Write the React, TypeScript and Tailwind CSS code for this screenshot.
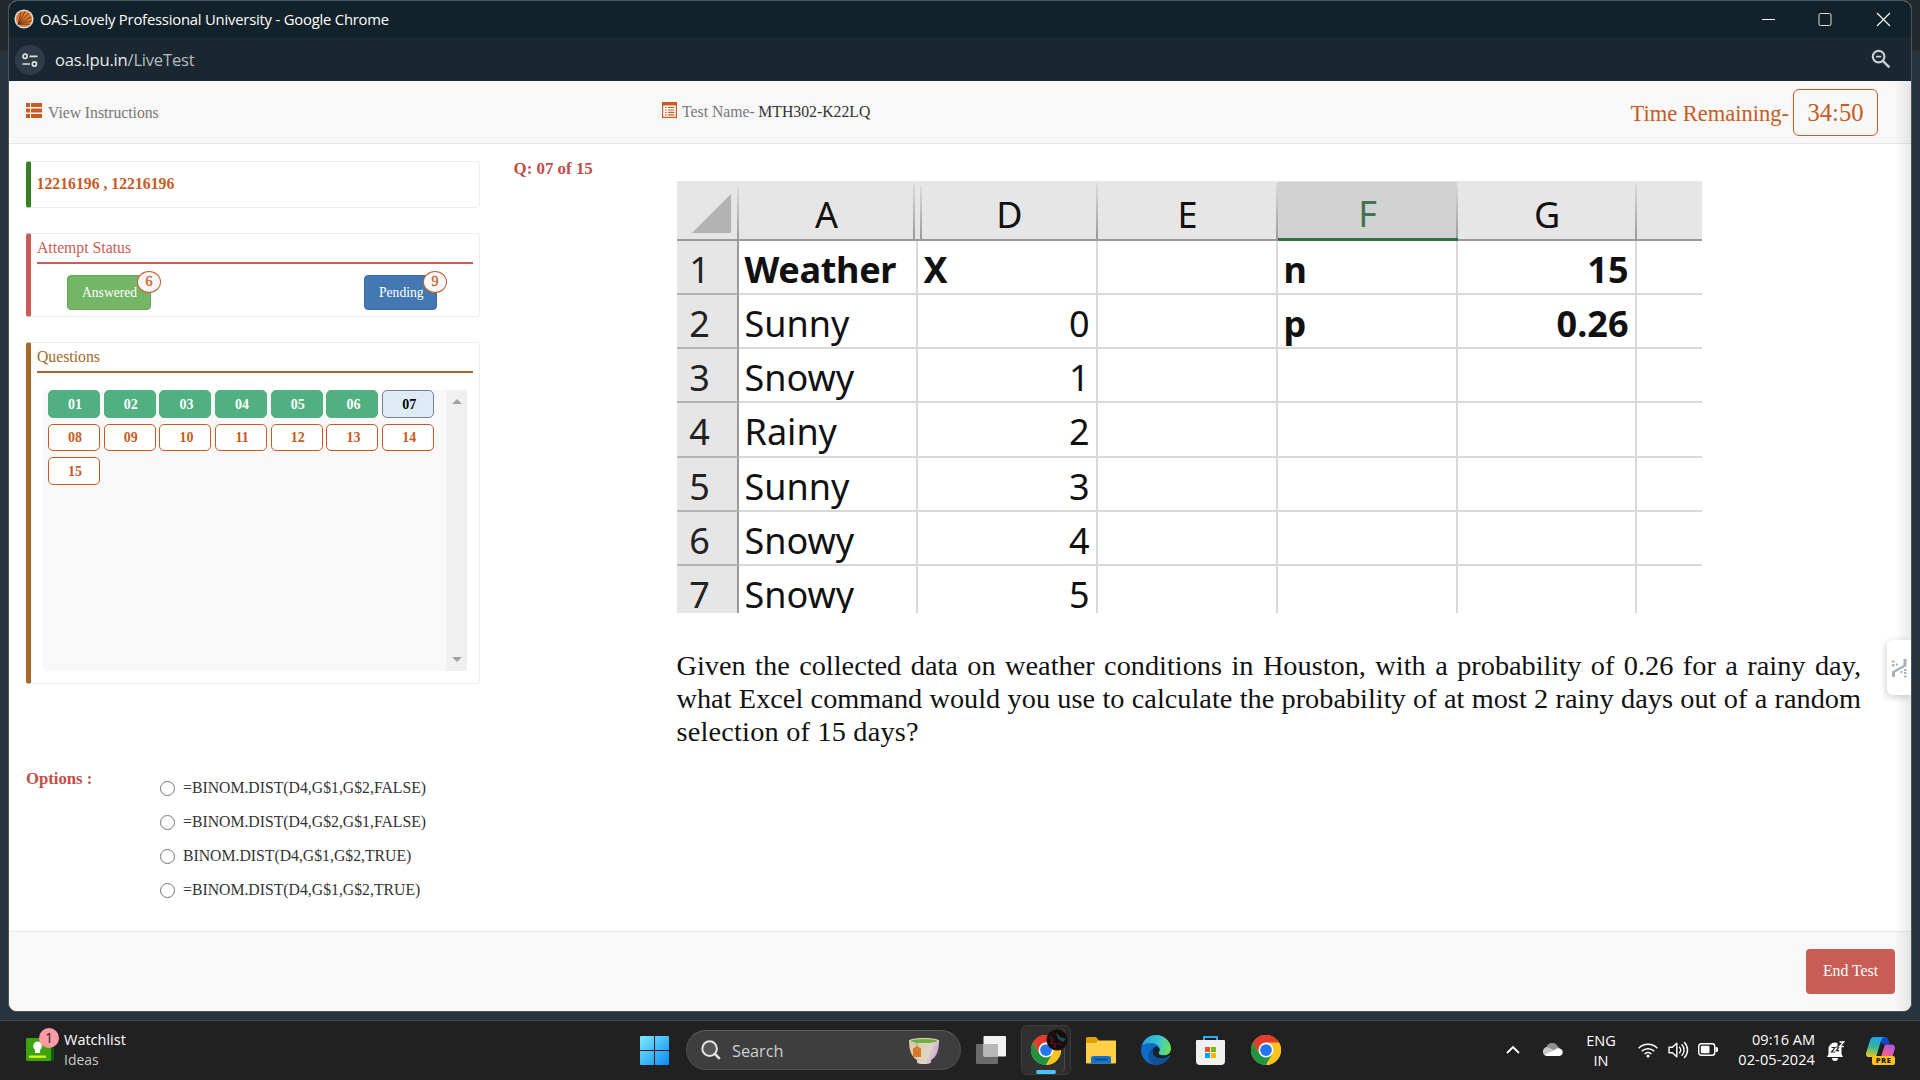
import type { ReactNode } from 'react';

const questionStates = Array.from({ length: 15 }, (_, i) => ({
  label: String(i + 1).padStart(2, '0'),
  state: i < 6 ? 'done' : i === 6 ? 'current' : 'todo',
}));

const options = [
  '=BINOM.DIST(D4,G$1,G$2,FALSE)',
  '=BINOM.DIST(D4,G$2,G$1,FALSE)',
  'BINOM.DIST(D4,G$1,G$2,TRUE)',
  '=BINOM.DIST(D4,G$1,G$2,TRUE)',
];

const sheetRows = [
  { n: 1, a: 'Weather', d: 'X', f: 'n', g: '15' },
  { n: 2, a: 'Sunny', d: '0', f: 'p', g: '0.26' },
  { n: 3, a: 'Snowy', d: '1', f: '', g: '' },
  { n: 4, a: 'Rainy', d: '2', f: '', g: '' },
  { n: 5, a: 'Sunny', d: '3', f: '', g: '' },
  { n: 6, a: 'Snowy', d: '4', f: '', g: '' },
  { n: 7, a: 'Snowy', d: '5', f: '', g: '' },
];

function ChromeIcon() {
  return (
    <svg viewBox="0 0 48 48" className="block size-[30px]">
      <circle cx="24" cy="24" r="24" fill="#fbc116" />
      <path d="M3.2 12A24 24 0 0 0 24 48L34.4 30 24 24 13.6 30Z" fill="#229342" />
      <path d="M24 12h20.8A24 24 0 0 1 24 48l10.4-18Z" fill="#fcc31e" />
      <path d="M3.2 12A24 24 0 0 1 44.8 12H24L13.6 30Z" fill="#e33b2e" />
      <circle cx="24" cy="24" r="12" fill="#fff" />
      <circle cx="24" cy="24" r="9.4" fill="#2378ee" />
    </svg>
  );
}

function TitleBar() {
  return (
    <div className="flex h-[37px] items-center bg-[#12222a] pl-[5px] text-white">
      <svg viewBox="0 0 20 20" className="-mt-px size-5">
        <circle cx="10" cy="10" r="9.6" fill="#d9dcde" />
        <circle cx="10" cy="10" r="8" fill="#e17a2c" />
        <path
          d="M4.2 15.2 7 3M4.2 15.2 11 2.5M4.2 15.2 14.5 4.5M4.2 15.2 17 8M4.2 15.2 17.5 11.8M4.2 15.2H16"
          stroke="#5b3320"
          strokeWidth=".9"
        />
      </svg>
      <span className="-mt-0.5 ml-1.5 font-['Open_Sans'] text-[14.8px] leading-5 tracking-[-0.2px] whitespace-nowrap">
        OAS-Lovely Professional University - Google Chrome
      </span>
      <svg viewBox="0 0 130 16" className="-mt-px mr-5 ml-auto h-4 w-[130px]" fill="none" stroke="#fff">
        <path d="M1 8.5h13" />
        <rect x="58" y="2.5" width="12" height="12" rx="1.5" stroke="#d6dadc" />
        <path d="m116 2 13 13M129 2l-13 13" strokeWidth="1.1" />
      </svg>
    </div>
  );
}

function UrlBar() {
  return (
    <div className="flex h-[43px] items-center border-t border-[#1d2b33] bg-[#1a2730] pr-5 pl-1.5">
      <div className="flex size-[30px] items-center justify-center rounded-full bg-[#2f3c47]">
        <svg viewBox="0 0 16 16" className="size-4" fill="none" stroke="#dfe3e6" strokeWidth="1.7">
          <circle cx="3.1" cy="4.3" r="2.1" />
          <path d="M7.5 4.3H15.5M.5 12H8" />
          <circle cx="12.4" cy="12" r="2.1" />
        </svg>
      </div>
      <span className="ml-2.5 font-['Open_Sans'] text-[16.6px] leading-6 tracking-[-0.22px] text-[#e6eaed]">
        oas.lpu.in<span className="text-[#b5bcc2]">/LiveTest</span>
      </span>
      <svg viewBox="0 0 20 20" className="-mt-0.5 ml-auto size-5" fill="none" stroke="#c9ced2" strokeWidth="2.2">
        <circle cx="7.6" cy="7.6" r="5.8" />
        <path d="m11.8 11.8 6.6 6.6" strokeWidth="2.4" />
        <path d="M5 7.6h5.2" strokeWidth="1.6" />
      </svg>
    </div>
  );
}

function TestHeader() {
  return (
    <div className="flex h-[63px] border-b border-[#e7e7e7] bg-[#f8f8f8] pt-[9px] pl-[17px] text-[15.75px] text-[#777]">
      <div className="flex h-11 w-[635.5px] items-center">
        <svg viewBox="0 0 16 15" className="-mt-1 h-[15px] w-4" fill="#c85a22">
          <path d="M0 0h4v4H0zM5 0h11v4H5zM0 5.5h4v4H0zM5 5.5h11v4H5zM0 11h4v4H0zM5 11h11v4H5z" />
        </svg>
        <span className="mt-px ml-1.5 tracking-[-0.05px]">View Instructions</span>
      </div>
      <div className="flex h-11 items-center">
        <svg viewBox="0 0 15 16" className="-mt-1 h-4 w-[15px]">
          <path d="M.6.6h13.8v14.8H.6z" fill="#fff" stroke="#c85a22" strokeWidth="1.2" />
          <path d="M0 0h15v3.5H0z" fill="#c85a22" />
          <path d="M3 5.5h1.6M6 5.5h6.4M3 8h1.6M6 8h6.4M3 10.4h1.6M6 10.4h6.4M3 12.8h1.6M6 12.8h6.4" stroke="#c85a22" strokeWidth="1.2" />
        </svg>
        <span className="ml-[5.5px]">Test Name-</span>
        <span className="ml-[3.5px] text-[#333]">MTH302-K22LQ</span>
      </div>
      <div className="mr-[33px] ml-auto flex text-[#c85a22]">
        <span className="mt-[7px] mr-1 text-[22.5px] leading-[34px]">Time Remaining-</span>
        <span className="-mt-px flex h-[47px] w-[85px] items-center justify-center rounded-md border border-[#c85a22] pt-0.5 text-[24.6px]">
          34:50
        </span>
      </div>
    </div>
  );
}

function Panel({ accent, className, children }: { accent: string; className: string; children: ReactNode }) {
  return (
    <section className={`rounded-[3px] border border-l-[5px] border-[#eee] ${accent} ${className}`}>{children}</section>
  );
}

function StatusButton({ label, count, className }: { label: string; count: number; className: string }) {
  return (
    <div className={`relative flex h-[35px] items-center rounded border pl-3.5 text-[13.6px] text-white ${className}`}>
      <span className="pt-px">{label}</span>
      <span className="absolute -top-[5px] -right-[11px] flex h-[22px] w-6 items-center justify-center rounded-[50%] border border-[#c85a22] bg-[#f8f8f8] pb-px text-[14px] text-[#c85a22] [-webkit-text-stroke:0.3px]">
        {count}
      </span>
    </div>
  );
}

function QuestionButton({ label, state }: { label: string; state: string }) {
  const look =
    state === 'done'
      ? 'border-[#50b07f] bg-[#50b07f] text-white'
      : state === 'current'
        ? 'border-[#7d8086] bg-[#deebf7] text-black'
        : 'border-[#c85a22] bg-white text-[#c85a22]';
  return (
    <div className={`flex h-[27.5px] w-[52px] items-center justify-center rounded-[5px] border pt-px pl-0.5 text-[14px] font-bold ${look}`}>
      {label}
    </div>
  );
}

function Sidebar() {
  return (
    <aside className="w-[454px] shrink-0">
      <Panel accent="border-l-[#36801f]" className="flex h-[47px] items-center pb-0.5 pl-[5.5px]">
        <span className="text-[15.75px] font-bold text-[#c85a22]">12216196 , 12216196</span>
      </Panel>

      <Panel accent="border-l-[#cb5b56]" className="mt-[25px] h-[84px] pr-1.5 pl-1.5">
        <h2 className="h-[30px] border-b-2 border-[#cb5b56] pt-[3px] text-[15.75px] leading-[22px] text-[#cb5b56]">Attempt Status</h2>
        <div className="flex justify-between pt-[11px] pr-9 pl-[30px]">
          <StatusButton label="Answered" count={6} className="w-[84px] border-[#64a758] bg-[#74b566]" />
          <StatusButton label="Pending" count={9} className="w-[73px] border-[#3b6da5] bg-[#4478b2]" />
        </div>
      </Panel>

      <Panel accent="border-l-[#a5692a]" className="mt-[25px] h-[342px] pr-1.5 pl-1.5">
        <h2 className="h-[30px] border-b-2 border-[#a5692a] pt-[3px] text-[15.75px] leading-[22px] text-[#a5692a]">Questions</h2>
        <div className="mt-[17px] mr-1.5 ml-[5px] flex h-[281px] justify-between rounded-l-md bg-[#f8f8f8]">
          <div className="ml-1.5 grid auto-rows-[33.5px] grid-cols-[repeat(7,55.7px)]">
            {questionStates.map((q) => (
              <QuestionButton key={q.label} label={q.label} state={q.state} />
            ))}
          </div>
          <div className="flex w-[21px] shrink-0 flex-col items-center justify-between bg-[#f0f0f0] py-[9px] text-[#a3a3a3]">
            <svg viewBox="0 0 10 5" className="h-[5px] w-2.5" fill="currentColor">
              <path d="M5 0 10 5H0z" />
            </svg>
            <svg viewBox="0 0 10 5" className="h-[5px] w-2.5" fill="currentColor">
              <path d="M0 0h10L5 5z" />
            </svg>
          </div>
        </div>
      </Panel>
    </aside>
  );
}

function HeaderCell({ label, className }: { label: string; className: string }) {
  return (
    <div className={`flex shrink-0 flex-col ${className}`}>
      <div className="h-[5px] bg-[#e6e6e6]" />
      <div className="grow border-r-2 border-transparent pt-2 pl-0.5 text-center leading-[48px] [border-image:linear-gradient(#dcdcdc,#9a9a9a)_1]">
        {label}
      </div>
    </div>
  );
}

function Spreadsheet() {
  return (
    <div className="h-[432px] w-[1025.5px] overflow-hidden bg-white font-['Noto_Sans'] text-[36px] text-[#111]">
      <div className="flex h-[59.5px] border-b-2 border-[#9a9a9a] bg-[#e6e6e6]">
        <div className="flex w-[62px] shrink-0 flex-col">
          <div className="h-[5px]" />
          <div className="flex grow items-end justify-end border-r-2 pr-1.5 pb-1.5 [border-image:linear-gradient(#dcdcdc,#9a9a9a)_1]">
            <svg viewBox="0 0 39 39" className="size-[39px]" fill="#b3b3b3">
              <path d="M39 0v39H0z" />
            </svg>
          </div>
        </div>
        <HeaderCell label="A" className="w-[176px]" />
        <HeaderCell label="" className="w-[7px]" />
        <HeaderCell label="D" className="w-[176px]" />
        <HeaderCell label="E" className="w-[180px]" />
        <HeaderCell label="F" className="-mb-0.5 w-[180px] border-b-[3px] border-[#2f7044] bg-[#d2d2d2] text-[#417355]" />
        <HeaderCell label="G" className="w-[179px]" />
      </div>
      {sheetRows.map((r) => (
        <div key={r.n} className={`flex h-[54.3px] leading-[57px] ${r.n === 1 ? 'font-bold' : ''}`}>
          <div className="w-[62px] shrink-0 border-r-2 border-b-2 border-r-[#9a9a9a] border-b-[#b4b4b4] bg-[#e6e6e6] pr-3.5 text-center font-normal text-[#222]">
            {r.n}
          </div>
          <div className={`w-[179px] shrink-0 border-r-2 border-b-2 border-[#d9d9d9] pl-1.5 ${r.n === 1 ? 'tracking-[-0.3px]' : ''}`}>{r.a}</div>
          <div className={`w-[180px] shrink-0 border-r-2 border-b-2 border-[#d9d9d9] px-1.5 ${r.n === 1 ? '' : 'text-right'}`}>{r.d}</div>
          <div className="w-[180px] shrink-0 border-r-2 border-b-2 border-[#d9d9d9]" />
          <div className="w-[180px] shrink-0 border-r-2 border-b-2 border-[#d9d9d9] pl-1.5 font-bold">{r.f}</div>
          <div className="w-[179px] shrink-0 border-r-2 border-b-2 border-[#d9d9d9] pr-1.5 text-right font-bold">{r.g}</div>
          <div className="grow border-b-2 border-[#d9d9d9]" />
        </div>
      ))}
    </div>
  );
}

function Question() {
  return (
    <div className="flex grow pl-[33.5px]">
      <div className="w-[163px] shrink-0 text-[16.9px] leading-[15px] font-bold text-[#c24d49]">Q: 07 of 15</div>
      <div className="w-[1184.5px] pt-5">
        <Spreadsheet />
        <div className="mt-9 text-[28.3px] leading-[33px] whitespace-nowrap text-[#111]">
          <p className="[text-align-last:justify]">
            Given the collected data on weather conditions in Houston, with a probability of 0.26 for a rainy day,
          </p>
          <p className="[text-align-last:justify]">
            what Excel command would you use to calculate the probability of at most 2 rainy days out of a random
          </p>
          <p className="tracking-[0.2px]">selection of 15 days?</p>
        </div>
      </div>
    </div>
  );
}

function BrowserWindow() {
  return (
    <div className="relative flex h-[1012px] flex-col overflow-hidden rounded-[9px] border border-[#4a5358] bg-white">
      <TitleBar />
      <UrlBar />
      <TestHeader />
      <main className="h-[787px] pt-[17px] pl-[17px]">
        <div className="flex h-[606px]">
          <Sidebar />
          <Question />
        </div>
        <div className="flex">
          <h3 className="w-[134px] text-[16.7px] leading-6 font-bold text-[#c24d49]">Options :</h3>
          <div className="pt-1">
            {options.map((o) => (
              <div key={o} className="flex h-[33.9px] items-center text-[15.75px] leading-[33px] text-[#333]">
                <span className="mt-0.5 mr-2 size-[15px] rounded-full border border-[#767676] bg-white" />
                {o}
              </div>
            ))}
          </div>
        </div>
      </main>
      <footer className="flex grow justify-end border-t border-[#e7e7e7] bg-[#f8f8f8] pt-[17px] pr-4">
        <div className="flex h-[45px] w-[89px] items-center justify-center rounded bg-[#c95c54] pb-0.5 text-[15.75px] text-white">End Test</div>
      </footer>
      <div className="absolute top-[80px] right-0 bottom-0 w-4 bg-linear-to-r from-transparent to-black/8" />
      <div className="absolute top-[639px] right-0 flex h-[55px] w-6 items-center justify-end rounded-l-md bg-white pr-1 shadow-[-1px_2px_7px_rgba(0,0,0,0.2)]">
        <svg viewBox="0 0 15 20" className="h-5 w-[15px]" fill="#aab0b5">
          <path d="M0 19v-5.500L11.500 7V1H14.500V8L3 14.500V19Z" />
          <path d="M0 2.500h2.500v2H0zM0 6h2.500v2.500H0zM4 5.500h2v2H4zM12 11h2.500v2H12zM12 14h2.500v2H12zM12 17.500h2.500v2H12zM8.500 13h2v2h-2z" />
        </svg>
      </div>
    </div>
  );
}

function Taskbar() {
  return (
    <div className="flex h-[60px] border-t border-[#454545] bg-[#212121] font-['Open_Sans'] text-[14.5px] leading-5 text-white">
      <div className="flex w-[640px] pl-[26px]">
        <div className="relative mt-[17px] h-[23px] w-7">
          <svg viewBox="0 0 28 23" className="h-[23px] w-7">
            <rect x="3" width="25" height="23" rx="1.5" fill="#0b5a16" />
            <rect width="25" height="23" rx="1.5" fill="#3da30f" />
            <path d="M11.5 3.5a4.6 4.6 0 0 1 2.6 8.2V15H9v-3.300A4.600 4.600 0 0 1 11.500 3.500Z" fill="#fff" />
            <path d="M3 17.500h17v2.400H3z" fill="#d5f20b" />
          </svg>
          <span className="absolute -top-2.5 left-[13px] flex size-5 items-center justify-center rounded-full bg-[#ff99a4] text-[14px] text-[#222]">
            1
          </span>
        </div>
        <div className="mt-[9px] ml-2.5">
          <div>Watchlist</div>
          <div className="text-[13.9px] text-[#c8c8c8]">Ideas</div>
        </div>
      </div>

      <svg viewBox="0 0 29 29" className="mt-[15px] size-[29px]">
        <defs>
          <linearGradient id="win" x1="0" y1="0" x2="1" y2="1">
            <stop offset="0" stopColor="#7deaff" />
            <stop offset="1" stopColor="#0a8bf5" />
          </linearGradient>
        </defs>
        <path d="M1 0h13v14H0V1a1 1 0 0 1 1-1ZM15 0h13a1 1 0 0 1 1 1v13H15ZM0 15h14v14H1a1 1 0 0 1-1-1ZM15 15h14v13a1 1 0 0 1-1 1H15Z" fill="url(#win)" />
      </svg>

      <div className="mt-[9px] ml-[17px] flex h-10 w-[275px] items-center rounded-full border border-[#4d4d4d] border-t-[#606060] bg-[#3e3e3e] pr-[21px] pl-3.5">
        <svg viewBox="0 0 20 20" className="size-5" fill="none" stroke="#e4e4e4" strokeWidth="2">
          <circle cx="8.600" cy="8.600" r="7.300" fill="#555" />
          <path d="m14 14 4.800 4.800" strokeWidth="2.500" />
        </svg>
        <span className="mt-0.5 ml-[11px] text-[16.3px] text-[#cfcfcf]">Search</span>
        <svg viewBox="0 0 30 26" className="mt-0.5 ml-auto h-[26px] w-[30px]">
          <defs>
            <linearGradient id="cup" x1="0" y1="0" x2="1" y2=".3">
              <stop offset="0" stopColor="#d9c9a4" />
              <stop offset=".75" stopColor="#dfd3c6" />
              <stop offset="1" stopColor="#cfa6dd" />
            </linearGradient>
          </defs>
          <path d="M0 2.500h30c0 10-2.500 17-8 19.500v2c0 1.500-2.500 2-7 2s-7-.5-7-2v-2C2.500 19 0 12 0 2.500Z" fill="url(#cup)" />
          <ellipse cx="15" cy="2.800" rx="15" ry="2.800" fill="#eadfc4" />
          <ellipse cx="15" cy="3" rx="13.400" ry="2" fill="#6cb045" />
          <path d="M8 4v5" stroke="#8d9a99" />
          <path d="m4 10.500 4-2.500 4 2.500V19H4Z" fill="#d97824" />
        </svg>
      </div>

      <svg viewBox="0 0 30 28" className="mt-[15px] ml-[15px] h-7 w-[30px]">
        <rect y="8" width="22" height="20" rx="1" fill="#6b6b6b" />
        <rect x="7.500" width="22.500" height="20.500" rx="1" fill="#f2f2f2" />
        <path d="M7.500 8H22v12.500H7.500z" fill="#b8b8b8" />
      </svg>

      <div className="relative mt-1 ml-[15px] h-[50px] w-[50px] rounded-md border border-[#3c3c3c] bg-[#2a2a2a]">
        <div className="h-12 w-[43px] rounded-md border-r border-[#484848] bg-[#303030] pt-[9px] pl-[9px]">
          <ChromeIcon />
        </div>
        <svg viewBox="0 0 22 22" className="absolute top-[3px] left-6 size-[22px]">
          <circle cx="11" cy="11" r="10.500" fill="#170d10" />
          <path d="m10 3 4 5 6 2-3 3-5-3Z" fill="#1d5158" />
          <path d="m3 8 4 2-2 4 5 1-2 4M12 14l3 2" stroke="#5a1418" strokeWidth="1.500" fill="none" />
        </svg>
        <span className="absolute bottom-0 left-3.5 h-1 w-5 rounded-full bg-[#4cc2ff]" />
      </div>

      <svg viewBox="0 0 30 27" className="mt-4 ml-[15px] h-[27px] w-[30px]">
        <path d="M0 1.500A1.500 1.500 0 0 1 1.500 0H10l3 3.500-2 4H0Z" fill="#e0a105" />
        <path d="M0 6h9.500l3-2.500H30V25.500a1 1 0 0 1-1 1H1a1 1 0 0 1-1-1Z" fill="#ffd046" />
        <path d="M5 26.500V21.500a2.500 2.500 0 0 1 2.500-2.500h15a2.500 2.500 0 0 1 2.500 2.500v5Z" fill="#1573cf" />
        <path d="M9 22.500h12" stroke="#0b4584" strokeWidth="1.500" strokeLinecap="round" />
      </svg>

      <svg viewBox="0 0 30 30" className="mt-3.5 ml-[25px] size-[30px]">
        <defs>
          <linearGradient id="edgeTop" x1="0" y1=".3" x2="1" y2=".5">
            <stop offset="0" stopColor="#2a9fe0" />
            <stop offset=".55" stopColor="#37c6cf" />
            <stop offset="1" stopColor="#6be05a" />
          </linearGradient>
        </defs>
        <circle cx="15" cy="15" r="15" fill="#0f6cc4" />
        <path d="M20 23.500c4 0 6.500-1.500 10-4V15h-6Z" fill="#212121" />
        <path d="M1 10C3.500 3.500 9 0 15 0c8.500 0 15 6.500 15 13.500 0 4-3 7-7.200 7-3.300 0-5.300-1.200-5.300-2.500 0-1 1.200-1.500 1.200-3.600C18.700 11 15 8 10.500 8 6 8 2.500 9.500 1 10Z" fill="url(#edgeTop)" />
        <path d="M11.500 17c0-3 1.500-5 4-5.800 2 .8 3.200 1.800 3.200 3.200 0 2.100-1.200 2.600-1.200 3.600 0 1.300 2 2.500 5.300 2.500 2 0 3.500-.5 5-1.500-1 3-4 4.500-7.500 4.500-5 0-8.800-3-8.800-6.500Z" fill="#17232c" />
        <path d="M11.500 17c0 4 3.800 6.700 8.800 6.700 3 0 5.500-1 7.200-2.200C25 27 20.500 30 15 30 9 29 7 24 7.500 20c.4-4 3.500-8 8-8.800-2.500.8-4 2.800-4 5.800Z" fill="#11509a" />
      </svg>

      <svg viewBox="0 0 29 30" className="mt-3.5 ml-[25px] h-[30px] w-[29px]">
        <path d="M8 6V2h13v4" fill="none" stroke="#25aef0" strokeWidth="2" />
        <path d="M1 5h27a1 1 0 0 1 1 1v20a4 4 0 0 1-4 4H4a4 4 0 0 1-4-4V6a1 1 0 0 1 1-1Z" fill="#f0f0f0" />
        <path d="M9 12h5v5H9z" fill="#f25022" />
        <path d="M15 12h5v5h-5z" fill="#7fba00" />
        <path d="M9 18h5v5H9z" fill="#00a4ef" />
        <path d="M15 18h5v5h-5z" fill="#ffb900" />
      </svg>

      <div className="mt-3.5 ml-[26px]">
        <ChromeIcon />
      </div>

      <svg viewBox="0 0 14 9" className="mt-6 ml-auto h-[9px] w-3.5" fill="none" stroke="#fff" strokeWidth="1.800">
        <path d="m1 8 6-6 6 6" />
      </svg>
      <svg viewBox="0 0 20 13" className="mt-[22px] ml-[23px] h-[13px] w-5">
        <path d="M4 12A4 4 0 0 1 3.500 4.200 6 6 0 0 1 14.500 3L18 7Z" fill="#8f8f8f" />
        <path d="M0 8.500a4.200 4.200 0 0 1 5-4.300L14 9l-10 4A4 4 0 0 1 0 8.500Z" fill="#c9c9c9" />
        <path d="M2 11.500 11.500 7A4.500 4.500 0 0 1 16.500 5.500 3.800 3.800 0 0 1 16.500 13H4a4 4 0 0 1-2-1.500Z" fill="#fff" />
      </svg>
      <div className="mt-2.5 ml-[22px] w-8 text-center">
        <div>ENG</div>
        <div>IN</div>
      </div>
      <svg viewBox="0 0 20 16" className="mt-[21px] ml-[21px] h-4 w-5" fill="none" stroke="#fff" strokeWidth="1.500">
        <path d="M.7 6.200a13.200 13.200 0 0 1 18.600 0M3.700 9.200a9 9 0 0 1 12.600 0M6.600 12a4.800 4.800 0 0 1 6.800 0" />
        <circle cx="10" cy="14" r="1.500" fill="#fff" stroke="none" />
      </svg>
      <svg viewBox="0 0 21 18" className="mt-5 ml-[10px] h-[18px] w-[21px]" fill="none" stroke="#fff" strokeWidth="1.400" strokeLinejoin="round">
        <path d="M1 6.200v5.600h3.400l4.400 4V2.200l-4.400 4Z" />
        <path d="M11.500 6.200a4 4 0 0 1 0 5.600M14 3.800a7.500 7.500 0 0 1 0 10.400M16.500 1.500a10.800 10.800 0 0 1 0 15" strokeLinecap="round" />
      </svg>
      <svg viewBox="0 0 20 13" className="mt-[22px] ml-[9px] h-[13px] w-5">
        <rect x=".7" y=".7" width="16" height="11.600" rx="2.500" fill="none" stroke="#fff" strokeWidth="1.400" />
        <rect x="2.800" y="2.800" width="8.700" height="7.400" rx="1" fill="#fff" />
        <path d="M17.500 4h1a1.500 1.500 0 0 1 1.500 1.500v2A1.500 1.500 0 0 1 18.500 9h-1z" fill="#fff" />
      </svg>
      <div className="mt-[9px] mr-px ml-4 w-[81px] text-right whitespace-nowrap">
        <div>09:16 AM</div>
        <div className="tracking-[0.1px]">02-05-2024</div>
      </div>
      <svg viewBox="0 0 18 20" className="mt-5 ml-[11px] h-5 w-[18px]" fill="#fff">
        <path d="M1.500 8a6.500 6.500 0 0 1 13 0v5l1.500 3H0l1.500-3Z" />
        <path d="M5 17h6a3 3 0 0 1-6 0Z" />
        <path d="M10.500 0H18v6h-3.500l-4-1Z" fill="#212121" />
        <path d="M4.500 6.500H8L4.500 11H8M9.300 5.800h2.900L9.300 9.700h2.900" stroke="#212121" strokeWidth="1.200" fill="none" />
        <path d="M12.500 1h4.200l-4.200 4.500h4.200" stroke="#fff" strokeWidth="1.300" fill="none" />
      </svg>
      <div className="relative mt-4 mr-[25px] ml-[21px] h-7 w-[29px]">
        <svg viewBox="0 0 29 24" className="h-6 w-[29px]">
          <defs>
            <linearGradient id="pilotA" x1=".5" y1="0" x2=".3" y2="1">
              <stop offset="0" stopColor="#1aa3f0" />
              <stop offset=".5" stopColor="#38b79a" />
              <stop offset="1" stopColor="#e7c81c" />
            </linearGradient>
            <linearGradient id="pilotB" x1=".8" y1="0" x2=".3" y2="1">
              <stop offset="0" stopColor="#a956e8" />
              <stop offset=".6" stopColor="#ec5f9a" />
              <stop offset="1" stopColor="#fb8a54" />
            </linearGradient>
          </defs>
          <path d="M10 0h9c2 0 3 1 3.500 3l1.200 4H17Z" fill="#1546c8" />
          <path d="M8 0h10c-2 1-3 3-4 7l-3 10c-.5 2-1.500 3-3 3H3c-2.500 0-3.500-2-2.800-4.500L4 3.500C4.700 1.200 6 0 8 0Z" fill="url(#pilotA)" />
          <path d="M19 7.500h6.500c2.800 0 4 2 3.300 4.500L26 21c-.5 2-1.500 3-4 3h-9l2-4Z" fill="url(#pilotB)" />
        </svg>
        <span className="absolute right-0 bottom-0 flex h-[9px] w-[23px] items-center justify-center rounded-[2px] bg-[#ffc20e] text-[7.500px] leading-none font-extrabold tracking-[0.600px] text-[#222]">
          PRE
        </span>
      </div>
    </div>
  );
}

export default function App() {
  return (
    <div className="h-[1080px] w-[1920px] overflow-hidden bg-[#27343d] font-['Liberation_Serif',serif]">
      <div className="h-[1020px] bg-linear-to-b from-[#22282c] from-[49px] to-[#27343d] to-[52px] px-2">
        <BrowserWindow />
      </div>
      <Taskbar />
    </div>
  );
}
